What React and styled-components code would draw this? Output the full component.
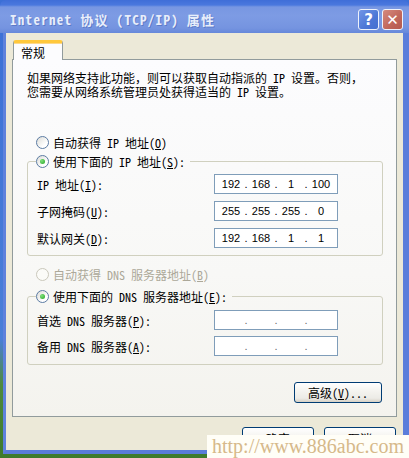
import React from 'react';
import styled, { createGlobalStyle } from 'styled-components';

const GlobalStyle = createGlobalStyle`
  html, body {
    margin: 0;
    padding: 0;
  }
  body {
    width: 409px;
    height: 458px;
    overflow: hidden;
    background: linear-gradient(to bottom, #3b6fd6 0%, #4a7fd8 74%, #4f8a3c 84%, #3f7a2c 100%);
    font-family: "Noto Sans Mono CJK SC", "Noto Sans CJK SC", "DejaVu Sans", sans-serif;
    font-size: 12px;
    color: #000;
  }
`;

const Desktop = styled.div`
  position: relative;
  width: 409px;
  height: 458px;
`;

const Window = styled.div`
  width: 409px;
  height: 454px;
  display: flex;
  flex-direction: column;
`;

const TitleBar = styled.div`
  box-sizing: border-box;
  height: 33px;
  padding: 6px 6px 0 10px;
  display: flex;
  align-items: center;
  border-radius: 6px 6px 0 0;
  background: linear-gradient(
    to bottom,
    #3f6ed8 0px,
    #4a78de 5px,
    #7897e2 7px,
    #7d9be4 16px,
    #7594e0 28px,
    #6688da 33px
  );
`;

const Title = styled.div`
  flex: 1;
  font-size: 13px;
  font-weight: bold;
  letter-spacing: 1.3px;
  color: #e8eefb;
  text-shadow: 1px 1px 0 rgba(40, 70, 150, 0.35);
  white-space: nowrap;
`;

const CaptionButton = styled.div`
  box-sizing: border-box;
  width: 21px;
  height: 21px;
  margin-left: 3px;
  border: 1px solid #eef2fb;
  border-radius: 3px;
  display: flex;
  align-items: center;
  justify-content: center;
  color: #fff;
  font-family: "DejaVu Sans", sans-serif;
  font-weight: bold;
  font-size: 15px;
  background: ${p => (p.$close
    ? 'linear-gradient(135deg, #d58a7f, #c0665a 60%, #b45a4f)'
    : 'linear-gradient(135deg, #6f95e6, #4d77d6 60%, #4570d0)')};
`;

const Frame = styled.div`
  flex: 1;
  display: flex;
  flex-direction: column;
  margin-left: 3px;
  padding: 7px 6px 0 6px;
  border-left: 3px solid #5f82dc;
  border-right: 6px solid #5b7edb;
  border-bottom: 4px solid #5a7cd8;
  background: #ece9d8;
`;

const TabStrip = styled.div`
  display: flex;
  padding-left: 1px;
`;

const Tab = styled.div`
  position: relative;
  z-index: 1;
  box-sizing: border-box;
  width: 50px;
  height: 20px;
  margin-bottom: -1px;
  padding: 3px 0 0 7px;
  background: #fcfcfe;
  border: 1px solid #919b9c;
  border-top: 3px solid #ffc83c;
  border-bottom: none;
  border-radius: 3px 3px 0 0;
  box-shadow: inset 0 1px 0 #fdd88a;
  line-height: 13px;
`;

const Panel = styled.div`
  display: flex;
  flex-direction: column;
  padding: 11px 13px 13px 14px;
  border: 1px solid #919b9c;
  background: linear-gradient(to bottom, #fcfcfe 0%, #f8f8f6 60%, #f4f3ee 100%);
`;

const Description = styled.p`
  margin: 0 0 37px;
  line-height: 14px;
  white-space: nowrap;
`;

const RadioRow = styled.div`
  display: flex;
  align-items: center;
  gap: 4px;
  height: 13px;
  margin-top: ${p => p.$gap || 0}px;
  padding-left: ${p => (p.$legend ? 0 : 9)}px;
  color: ${p => (p.$disabled ? '#aca899' : '#000')};
  line-height: 13px;
  white-space: nowrap;
`;

const RadioDot = styled.span`
  box-sizing: border-box;
  flex: none;
  width: 13px;
  height: 13px;
  border-radius: 50%;
  border: 1px solid ${p => (p.$disabled ? '#cac8bb' : '#5b7ba3')};
  background: ${p => (p.$disabled ? '#fbfbf8' : 'linear-gradient(135deg, #dcdcd7, #ffffff 70%)')};
  display: flex;
  align-items: center;
  justify-content: center;

  &::after {
    content: '';
    display: ${p => (p.$checked ? 'block' : 'none')};
    width: 5px;
    height: 5px;
    border-radius: 50%;
    background: radial-gradient(circle at 35% 35%, #7fe07c, #24a424);
  }
`;

const Key = styled.u`
  text-underline-offset: 1px;
`;

const GroupBox = styled.fieldset`
  margin: ${p => p.$gap || 0}px 0 0;
  min-width: 0;
  padding: ${p => p.$top}px 9px ${p => p.$bottom}px 8px;
  border: 1px solid #d0d0bf;
  border-radius: 3px;
`;

const Legend = styled.legend`
  padding: 0 5px 0 0;
  margin-left: 0;
`;

const FieldList = styled.div`
  display: grid;
  gap: ${p => p.$gap}px;
  padding-left: 1px;
`;

const FieldRow = styled.div`
  display: flex;
  align-items: center;
  height: 20px;
`;

const FieldLabel = styled.span`
  width: 177px;
  white-space: nowrap;
  line-height: 13px;
`;

const IpBox = styled.div`
  box-sizing: border-box;
  width: 124px;
  height: 20px;
  padding-left: 3px;
  border: 1px solid #7f9db9;
  background: #fff;
  display: flex;
  align-items: center;
  font-family: "Liberation Sans", Arial, sans-serif;
  font-size: 11px;
`;

const Segment = styled.span`
  width: 26px;
  text-align: center;
`;

const Dot = styled.span`
  width: 4px;
  text-align: center;
  color: ${p => (p.$faint ? '#6b6b6b' : '#000')};
`;

const XpButton = styled.div`
  box-sizing: border-box;
  width: ${p => p.$w}px;
  height: ${p => p.$h}px;
  border: 1px solid #003c74;
  border-radius: 3px;
  display: flex;
  align-items: center;
  justify-content: center;
  background: linear-gradient(to bottom, #ffffff 0%, #f5f4f0 40%, #ecebe6 80%, #d6d0c5 100%);
  white-space: nowrap;
  line-height: 13px;
`;

const AdvancedWrap = styled.div`
  display: flex;
  justify-content: flex-end;
  margin-top: 17px;
  padding-right: 1px;
`;

const ButtonBar = styled.div`
  display: flex;
  justify-content: flex-end;
  gap: 10px;
  margin-top: 10px;
  padding-right: 1px;
`;

const Watermark = styled.div`
  position: absolute;
  right: 0;
  bottom: 0;
  box-sizing: border-box;
  width: 202px;
  height: 23px;
  padding-left: 5px;
  background: #fffef7;
  color: #d6b98a;
  font-family: "Liberation Serif", "Times New Roman", serif;
  font-size: 20px;
  line-height: 23px;
  white-space: nowrap;
`;

const IpField = ({ parts }) => (
  <IpBox>
    {[0, 1, 2, 3].map(i => (
      <React.Fragment key={i}>
        <Segment>{parts ? parts[i] : ''}</Segment>
        {i < 3 && <Dot $faint={!parts}>.</Dot>}
      </React.Fragment>
    ))}
  </IpBox>
);

const Radio = ({ checked, disabled, legend, gap, children }) => (
  <RadioRow $disabled={disabled} $legend={legend} $gap={gap}>
    <RadioDot $checked={checked} $disabled={disabled} />
    <span>{children}</span>
  </RadioRow>
);

export default function App() {
  return (
    <Desktop>
      <GlobalStyle />
      <Window>
        <TitleBar>
          <Title>Internet 协议 (TCP/IP) 属性</Title>
          <CaptionButton>?</CaptionButton>
          <CaptionButton $close>✕</CaptionButton>
        </TitleBar>
        <Frame>
          <TabStrip>
            <Tab>常规</Tab>
          </TabStrip>
          <Panel>
            <Description>
              如果网络支持此功能，则可以获取自动指派的 IP 设置。否则，
              <br />
              您需要从网络系统管理员处获得适当的 IP 设置。
            </Description>

            <Radio>自动获得 IP 地址(<Key>O</Key>)</Radio>
            <GroupBox $gap={6} $top={6} $bottom={7}>
              <Legend>
                <Radio checked legend>使用下面的 IP 地址(<Key>S</Key>):</Radio>
              </Legend>
              <FieldList $gap={7}>
                <FieldRow>
                  <FieldLabel>IP 地址(<Key>I</Key>):</FieldLabel>
                  <IpField parts={['192', '168', '1', '100']} />
                </FieldRow>
                <FieldRow>
                  <FieldLabel>子网掩码(<Key>U</Key>):</FieldLabel>
                  <IpField parts={['255', '255', '255', '0']} />
                </FieldRow>
                <FieldRow>
                  <FieldLabel>默认网关(<Key>D</Key>):</FieldLabel>
                  <IpField parts={['192', '168', '1', '1']} />
                </FieldRow>
              </FieldList>
            </GroupBox>

            <Radio disabled gap={12}>自动获得 DNS 服务器地址(<Key>B</Key>)</Radio>
            <GroupBox $gap={9} $top={7} $bottom={8}>
              <Legend>
                <Radio checked legend>使用下面的 DNS 服务器地址(<Key>E</Key>):</Radio>
              </Legend>
              <FieldList $gap={6}>
                <FieldRow>
                  <FieldLabel>首选 DNS 服务器(<Key>P</Key>):</FieldLabel>
                  <IpField />
                </FieldRow>
                <FieldRow>
                  <FieldLabel>备用 DNS 服务器(<Key>A</Key>):</FieldLabel>
                  <IpField />
                </FieldRow>
              </FieldList>
            </GroupBox>

            <AdvancedWrap>
              <XpButton $w={88} $h={21}>高级(<Key>V</Key>)...</XpButton>
            </AdvancedWrap>
          </Panel>
          <ButtonBar>
            <XpButton $w={72} $h={23}>确定</XpButton>
            <XpButton $w={72} $h={23}>取消</XpButton>
          </ButtonBar>
        </Frame>
      </Window>
      <Watermark>http://www.886abc.com</Watermark>
    </Desktop>
  );
}
